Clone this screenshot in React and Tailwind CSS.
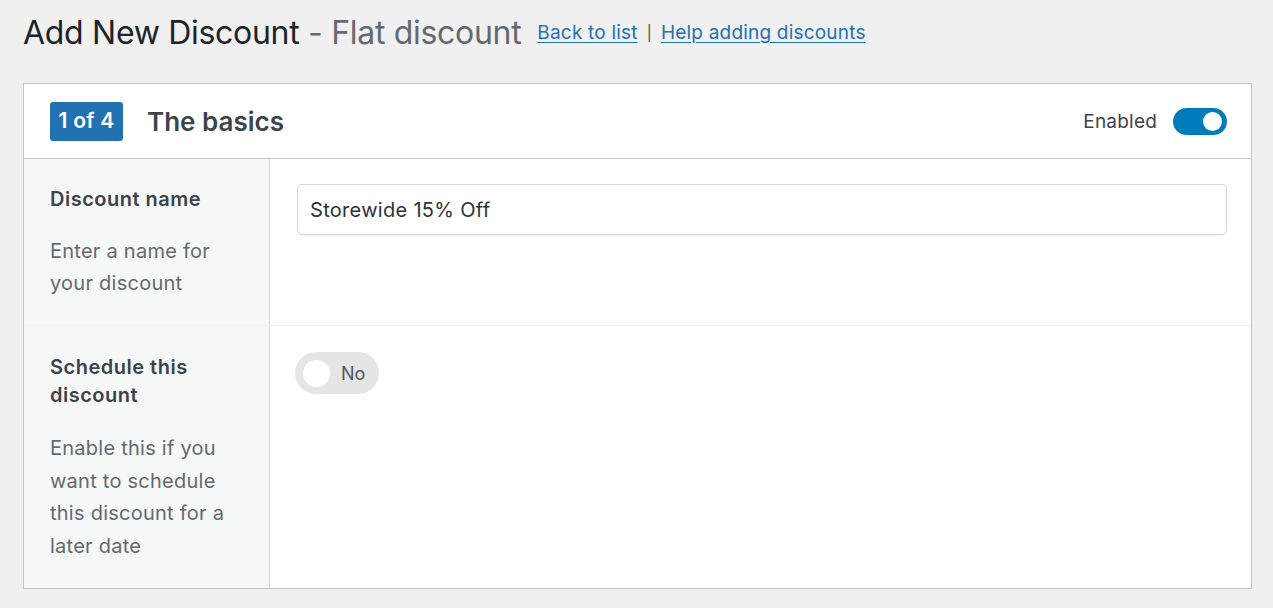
const font = { fontFamily: 'Inter, "Noto Sans", sans-serif' };

const App = () => {
  return (
    <div className="min-h-[608px] bg-[#f0f0f1] pl-[23px] pr-[21px] pt-[14px] pb-5" style={font}>
      <div className="flex items-center h-[38px]">
        <h1 className="text-[32px] leading-[38px] text-[#1d2327] tracking-[-0.3px]">
          Add New Discount <span className="text-[#646970]">- Flat discount</span>
        </h1>
        <div className="ml-4 flex items-center text-[19px] tracking-[0.2px] text-[#2271b1]">
          <a href="#" className="underline underline-offset-[3px]">Back to list</a>
          <span className="mx-[9px] text-[15px] text-[#3c434a]">|</span>
          <a href="#" className="underline underline-offset-[3px]">Help adding discounts</a>
        </div>
      </div>

      <div className="mt-[31px] bg-white border border-[#c3c4c7]">
        <div className="flex items-center h-[75px] pl-[26px] pr-[24px] border-b border-[#c3c4c7]">
          <span className="bg-[#2271b1] text-white font-semibold text-[21px] tracking-[0.3px] rounded-[3px] h-[39px] w-[73px] flex items-center justify-center">
            1 of 4
          </span>
          <h2 className="ml-[24px] text-[26px] font-semibold text-[#3c434a]">The basics</h2>
          <div className="ml-auto flex items-center">
            <span className="mt-[3px] text-[19px] tracking-[0.2px] text-[#3c434a]">Enabled</span>
            <span className="ml-[16px] w-[54px] h-[27px] rounded-full bg-[#007cba] flex items-center justify-end pr-[5px]">
              <span className="w-[19px] h-[19px] rounded-full bg-white"></span>
            </span>
          </div>
        </div>

        <div className="flex border-b border-[#f0f0f1]">
          <div className="w-[246px] shrink-0 bg-[#f6f7f7] border-r border-[#dcdcde] pl-[26px] pr-4 pt-[26px] pb-[26px]">
            <div className="text-[20px] font-semibold leading-[28px] tracking-[0.5px] text-[#3c434a]">Discount name</div>
            <p className="mt-[22px] text-[20px] leading-[32px] tracking-[0.25px] text-[#646970]">
              Enter a name for your discount
            </p>
          </div>
          <div className="flex-1 pl-[27px] pr-[24px] pt-[25px]">
            <div className="h-[51px] border border-[#d5d5da] rounded-[5px] shadow-[0_1px_2px_rgba(0,0,0,0.06)] flex items-center px-[12px] text-[20px] tracking-[0.3px] text-[#2c3338]">
              Storewide 15% Off
            </div>
          </div>
        </div>

        <div className="flex">
          <div className="w-[246px] shrink-0 bg-[#f6f7f7] border-r border-[#dcdcde] pl-[26px] pr-4 pt-[27px] pb-[26px]">
            <div className="text-[20px] font-semibold leading-[28px] tracking-[0.5px] text-[#3c434a]">
              Schedule this discount
            </div>
            <p className="mt-[23px] text-[20px] leading-[32.5px] tracking-[0.25px] text-[#646970]">
              Enable this if you want to schedule this discount for a later date
            </p>
          </div>
          <div className="flex-1 pl-[25px] pt-[26px]">
            <span className="inline-flex items-center w-[84px] h-[42px] rounded-full bg-[#e5e5e5] pl-[8px]">
              <span className="w-[27px] h-[27px] rounded-full bg-white"></span>
              <span className="ml-[11px] text-[18px] text-[#50575e]">No</span>
            </span>
          </div>
        </div>
      </div>
    </div>
  );
};

export default App;
